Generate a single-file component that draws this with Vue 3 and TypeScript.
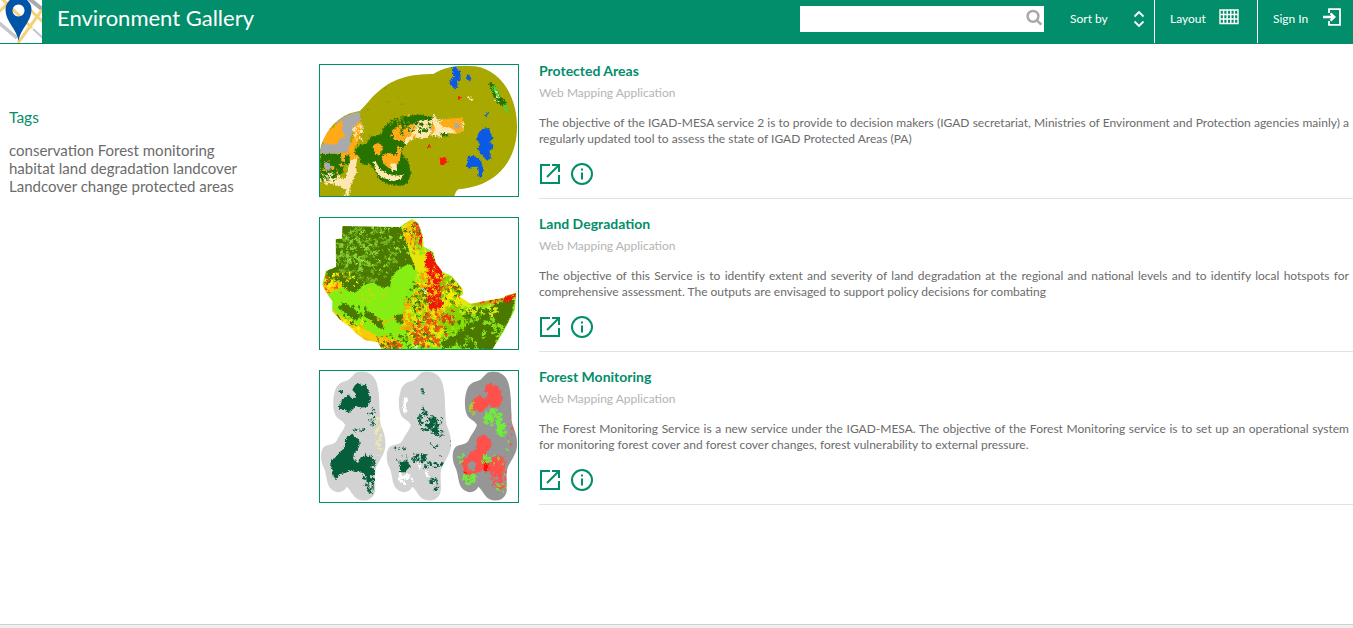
<script setup lang="ts">
interface Shape { fill: string; d: string }
interface Scatter { fill: string; cx: number; cy: number; rx: number; ry: number; n: number; s: number; seed: number }
interface Item {
  title: string
  lines: string[]
  outline: string[]
  base: string
  shapes: Shape[]
  scatter: Scatter[]
}

function speckle(s: Scatter): string {
  let state = s.seed * 7919 + 17
  const rnd = (): number => {
    state = (state * 16807) % 2147483647
    return state / 2147483647
  }
  for (let i = 0; i < 5; i++) rnd()
  let d = ''
  for (let i = 0; i < s.n; i++) {
    const a = rnd() * Math.PI * 2
    const r = Math.sqrt(rnd())
    const x = s.cx + Math.cos(a) * r * s.rx
    const y = s.cy + Math.sin(a) * r * s.ry
    const w = s.s * (0.5 + rnd())
    const h = s.s * (0.5 + rnd())
    d += `M${x.toFixed(1)} ${y.toFixed(1)}l${w.toFixed(1)} ${(h * 0.4).toFixed(1)}l${(-w * 0.3).toFixed(1)} ${h.toFixed(1)}l${(-w).toFixed(1)} ${(-h * 0.5).toFixed(1)}z`
  }
  return d
}

const sc = (fill: string, cx: number, cy: number, rx: number, ry: number, n: number, s: number, seed: number): Scatter =>
  ({ fill, cx, cy, rx, ry, n, s, seed })

const lobe = (x: number): string =>
  `M${x + 105} 20C${x + 130} 10 ${x + 160} 22 ${x + 168} 50C${x + 178} 85 ${x + 175} 120 ${x + 178} 150C${x + 174} 175 ${x + 194} 195 ${x + 194} 230C${x + 196} 260 ${x + 178} 280 ${x + 168} 300C${x + 158} 325 ${x + 166} 350 ${x + 163} 375C${x + 160} 398 ${x + 138} 408 ${x + 118} 402C${x + 96} 396 ${x + 92} 372 ${x + 78} 362C${x + 70} 380 ${x + 48} 384 ${x + 32} 370C${x + 16} 355 ${x + 20} 330 ${x + 10} 306C${x} 290 ${x - 2} 262 ${x + 6} 248C${x + 14} 232 ${x + 38} 240 ${x + 48} 224C${x + 55} 208 ${x + 68} 194 ${x + 74} 178C${x + 68} 162 ${x + 48} 162 ${x + 42} 142C${x + 34} 118 ${x + 38} 80 ${x + 48} 62C${x + 60} 42 ${x + 84} 48 ${x + 90} 35Z`

const upperForest = (x: number): string =>
  `M${x + 103} 57L${x + 118} 50 ${x + 122} 60 ${x + 136} 56 ${x + 141} 72 ${x + 148} 76 ${x + 144} 88 ${x + 152} 96 ${x + 148} 106 ${x + 140} 122 ${x + 120} 125 ${x + 112} 118 ${x + 98} 128 ${x + 84} 142 ${x + 74} 132 ${x + 56} 132 ${x + 54} 118 ${x + 62} 110 ${x + 64} 98 ${x + 76} 92 ${x + 84} 86 ${x + 92} 96 ${x + 106} 95 ${x + 104} 82 ${x + 95} 72Z`
const lowerForest = (x: number): string =>
  `M${x + 80} 212L${x + 95} 203 ${x + 105} 215 ${x + 114} 218 ${x + 118} 235 ${x + 112} 250 ${x + 100} 262 ${x + 98} 276 ${x + 112} 292 ${x + 120} 274 ${x + 140} 270 ${x + 154} 274 ${x + 152} 296 ${x + 154} 318 ${x + 148} 330 ${x + 152} 344 ${x + 142} 352 ${x + 134} 326 ${x + 114} 314 ${x + 102} 318 ${x + 88} 312 ${x + 74} 322 ${x + 58} 324 ${x + 46} 340 ${x + 36} 328 ${x + 34} 306 ${x + 28} 298 ${x + 32} 280 ${x + 44} 276 ${x + 54} 260 ${x + 68} 250 ${x + 74} 238 ${x + 72} 222Z`

const items: Item[] = [
  {
    title: 'Protected Areas',
    lines: [
      'The objective of the IGAD-MESA service 2 is to provide to decision makers (IGAD secretariat, Ministries of Environment and Protection agencies mainly) a',
      'regularly updated tool to assess the state of IGAD Protected Areas (PA)',
    ],
    base: '#a8a800',
    outline: ['M15 270C25 225 55 180 105 160L135 152C160 128 170 110 192 93C240 50 300 42 355 42C390 18 440 14 480 19C550 28 606 100 606 200C606 295 555 350 500 372C470 383 450 386 430 388Q423 392 418 408L15 408Z'],
    shapes: [
      { fill: '#aaaaaa', d: 'M15 270L38 224 75 176 135 153 137 180 116 207 105 240 113 277 15 282Z' },
      { fill: '#ffaa16', d: 'M38 213l45 -34 -2 38 12 10 -18 9 -10 16 -34 0 -13 -10zM119 200l15 -17 10 12 -8 19 -8 35 -12 17 5 18 -20 8 -1 -30 14 -24z' },
      { fill: '#ffaa16', d: 'M70 279l55 -2 7 13 -10 15 -33 5 -18 -4z' },
      { fill: '#267300', d: 'M16 282l62 0 1 21 11 5 0 -24 13 0 2 30 -17 -5 -6 32 -18 15 -18 -7 -12 17 -18 -12z' },
      { fill: '#ffe8b0', d: 'M105 305l22 -15 -4 30 2 14 -15 35 -10 39 -20 0 4 -25 -58 -18 12 -14 24 7 28 -4z' },
      { fill: '#267300', d: 'M117 278l15 -24 23 -3 10 -21 35 -8 7 -22 20 -18 30 -12 35 -4 25 -2 38 8 13 12 -15 13 -26 2 -18 15 -16 25 -22 12 -14 25 8 10 15 20 8 33 -9 31 -20 8 -37 -4 -29 -16 -12 -26 -20 -24 -8 8 -18 -10 -1 -14z' },
      { fill: '#ffe8b0', d: 'M175 304l8 3 12 20 24 15 29 5 20 -3 -11 13 -24 6 -32 -10 -19 -19z' },
      { fill: '#ffe8b0', d: 'M283 210l14 -20 22 -11 32 2 6 -22 10 23 20 -5 52 -1 8 20 -2 18 -25 7 -22 -2 -17 12 -35 -5 -24 10 -18 -3 -31 20 -6 -4z' },
      { fill: '#ffaa16', d: 'M233 212l22 -14 2 24 10 8 -12 14 -18 -5zM265 198l15 8 0 22 -15 7zM278 165l8 -3 -2 15zM175 256l17 -10 12 17 -8 20 -16 2zM200 288l22 -9 23 7 3 -30 12 11 -5 29 -11 21 -20 10 -20 -17zM328 190l25 0 9 17 -10 17 -23 -8zM387 178l56 -4 -2 20 6 18 -22 8 -18 -16 -22 -3 -14 -12z' },
      { fill: '#aaaaaa', d: 'M334 196l15 0 0 17 -12 0zM418 187l15 5 0 17 -13 -5zM27 306l15 2 11 14 -13 16 -12 -8z' },
      { fill: '#ffe8b0', d: 'M226 310l18 2 3 17 -13 5 -8 -10z' },
      { fill: '#0a5ae6', d: 'M411 21l13 -3 2 12 12 4 -2 27 -9 6 1 15 -9 6 -16 -19 5 -13 10 -3 -7 -19zM457 42l12 12 -4 11 -11 -12zM499 208l19 -4 9 13 6 21 -10 9 13 8 -5 14 -8 2 5 24 -14 7 -23 -28 -4 -10 9 -13 -12 -13 7 -19zM456 291l19 -5 20 11 10 28 -4 26 -12 3 3 -21 -9 -16 -16 9 -14 -6 6 -14zM505 164l6 3 8 -13 3 2 -6 16z' },
      { fill: '#267300', d: 'M374 218l22 2 5 10 -23 -2zM520 67l13 3 15 22 12 22 13 8 -2 25 -12 -12 -11 -5 -8 -15z' },
      { fill: '#45d53c', d: 'M530 77l14 5 10 30 -12 -6zM562 132l11 3 8 34 -13 -22z' },
      { fill: '#ff1808', d: 'M429 107l11 4 -1 7 -10 -2zM337 254l10 2 -1 8 -10 -2zM374 295l16 -5 9 17 -10 2 -6 8 -7 -9z' },
    ],
    scatter: [
      sc('#ffe8b0', 313, 201, 38, 20, 50, 7, 1), sc('#267300', 303, 189, 50, 24, 45, 6, 2),
      sc('#ffaa16', 260, 210, 45, 28, 30, 7, 3), sc('#ffe8b0', 45, 352, 29, 18, 40, 6, 4),
      sc('#ffaa16', 50, 321, 30, 26, 12, 6, 5), sc('#a8a800', 55, 395, 34, 25, 75, 6, 6),
      sc('#ffe8b0', 128, 210, 16, 30, 20, 6, 7), sc('#a8a800', 245, 188, 42, 18, 22, 4, 8),
      sc('#ffe8b0', 465, 112, 10, 5, 5, 4, 9), sc('#736b45', 210, 110, 120, 60, 9, 3, 10),
      sc('#d7f5b5', 544, 106, 8, 22, 9, 4, 11), sc('#267300', 40, 345, 26, 20, 28, 5, 12),
    ],
  },
  {
    title: 'Land Degradation',
    lines: [
      'The objective of this Service is to identify extent and severity of land degradation at the regional and national levels and to identify local hotspots for',
      'comprehensive assessment. The outputs are envisaged to support policy decisions for combating',
    ],
    base: '#86ee12',
    outline: ['M82 39L255 42 270 31 292 18 309 31 323 65 326 101 354 116 363 150 382 176 410 189 444 229 443 246 432 250 467 272 510 264 565 254 575 247 604 239 599 291 566 355 533 408 200 408 188 387 151 382 123 361 105 342 75 320 52 295 52 265 34 239 22 215 33 174 63 161 62 79 81 76Z'],
    shapes: [
      { fill: '#4b7900', d: 'M82 39L255 42 280 73 294 100 310 122 322 160 300 170 285 153 254 166 230 190 225 220 200 224 175 208 145 216 120 238 90 230 70 200 42 185 33 174 63 161 62 79 81 76ZM448 290l34 -10 28 10 54 -26 35 -3 -11 49 -55 98 -69 0 -40 -11 -38 11 -9 -20 35 -14 35 -28 4 -31z' },
      { fill: '#e6e60a', d: 'M260 41l32 -22 18 13 13 33 4 37 36 48 20 28 50 28 10 40 28 22 -27 13 -38 10 -12 42 -30 69 -70 0 -22 -50 -12 -20 8 -45 30 -50 8 -60 -20 -50z' },
      { fill: '#ee1808', d: 'M302 32l9 -1 10 40 0 32 -13 -13 0 -28zM334 116l15 2 15 35 17 22 2 33 -7 42 5 34 -14 4 -12 -12 -20 0 -3 -23 13 -11 -9 -24 15 -4 -13 -25 -9 -40 6 -16zM402 286l26 -3 -19 20z' },
      { fill: '#c8a808', d: 'M460 272l80 -12 63 -22 0 18 -40 8 -60 14z' },
      { fill: '#ee1808', d: 'M492 266l14 -4 2 8zM568 251l14 -7 8 4 12 -8 0 10 -14 10 -22 4z' },
      { fill: '#f8cb08', d: 'M22 214l58 -9 0 20 -38 15 -8 10zM52 290l42 30 50 25 50 28 56 8 15 27 -65 0 -20 -20 -32 -6 -30 -16 -30 -30 -28 -18z' },
      { fill: '#4b7900', d: 'M81 268l20 9 21 15 13 20 -12 13 -22 -16 -18 -15zM148 290l27 14 28 20 3 27 -20 -8 -15 -20 -22 -12zM235 307l28 -3 3 29 -20 -3zM35 180l28 8 5 16 -38 12z' },
      { fill: '#ffffff', d: 'M318 228l9 -3 8 14 -7 11 -6 -10zM298 386l7 -4 2 26 -7 0zM337 350l7 -5 -5 20z' },
    ],
    scatter: [
      sc('#77b626', 150, 120, 95, 85, 290, 6, 21), sc('#99e72e', 190, 105, 105, 75, 65, 6, 22),
      sc('#4b7900', 165, 110, 100, 85, 170, 7, 23), sc('#86ce3a', 125, 105, 55, 60, 60, 7, 24),
      sc('#ffbd08', 285, 53, 26, 30, 42, 8, 25), sc('#e85b11', 300, 70, 20, 52, 34, 6, 26),
      sc('#4b7900', 290, 40, 28, 18, 14, 5, 46), sc('#86e612', 305, 95, 22, 40, 24, 6, 47),
      sc('#86e612', 324, 290, 58, 118, 165, 7, 27), sc('#ff9b00', 345, 255, 52, 105, 115, 7, 28),
      sc('#ee1808', 358, 220, 24, 70, 90, 9, 29), sc('#f8ef00', 405, 225, 32, 38, 45, 7, 30),
      sc('#f8cb08', 352, 205, 28, 60, 40, 6, 48), sc('#86c410', 405, 225, 40, 40, 50, 7, 49),
      sc('#4b7900', 420, 230, 42, 44, 26, 6, 31), sc('#f05010', 343, 348, 58, 54, 60, 9, 32),
      sc('#86df15', 482, 350, 80, 60, 45, 10, 33), sc('#4b7900', 108, 300, 54, 34, 32, 8, 34),
      sc('#ffb000', 205, 360, 92, 52, 30, 8, 35), sc('#e25711', 225, 393, 48, 15, 25, 7, 36),
      sc('#4b7900', 240, 385, 75, 27, 38, 6, 37), sc('#c8d808', 175, 244, 44, 24, 18, 6, 38),
      sc('#fa5611', 58, 210, 45, 28, 14, 6, 39), sc('#ff9b00', 273, 299, 13, 56, 32, 7, 40),
      sc('#86d400', 415, 313, 42, 40, 78, 9, 41), sc('#d8eb12', 490, 285, 60, 20, 35, 7, 42),
      sc('#ee3510', 405, 305, 32, 24, 18, 7, 50), sc('#4b7900', 430, 340, 60, 60, 40, 7, 51),
      sc('#4b7900', 302, 246, 30, 44, 34, 6, 43), sc('#ee3510', 415, 220, 28, 30, 12, 6, 44),
      sc('#f8ef00', 78, 200, 48, 26, 28, 6, 45), sc('#4b7900', 320, 345, 50, 60, 40, 5, 52),
      sc('#ee1808', 540, 259, 55, 8, 22, 5, 53), sc('#f8ef00', 105, 340, 50, 28, 30, 7, 54),
    ],
  },
  {
    title: 'Forest Monitoring',
    lines: [
      'The Forest Monitoring Service is a new service under the IGAD-MESA. The objective of the Forest Monitoring service is to set up an operational system',
      'for monitoring forest cover and forest cover changes, forest vulnerability to external pressure.',
    ],
    base: '#d2d2d2',
    outline: [lobe(17), lobe(214), lobe(412)],
    shapes: [
      { fill: '#969696', d: 'M408 0h220v420h-220z' },
      { fill: '#065f3b', d: upperForest(17) },
      { fill: '#065f3b', d: lowerForest(17) },
      { fill: '#ff514b', d: upperForest(412) },
      { fill: '#ff514b', d: lowerForest(412) },
      { fill: '#969696', d: 'M457 293l18 -8 9 10 -8 20 -15 -3z' },
      { fill: '#ff1005', d: 'M506 290l15 5 -3 18 -10 5zM448 310l12 18 5 16 -12 -10z' },
      { fill: '#065f3b', d: 'M254 288l18 -6 11 9 4 11 -10 8 -4 9 -18 0z' },
      { fill: '#ffffff', d: 'M267 97l7 -5 6 11 -8 11 5 24 -8 5 -6 -10zM252 319l14 11 15 -5 -2 18 -15 -6 -14 12zM307 291l12 6 -5 16zM330 318l7 -5 5 21 -8 -2z' },
      { fill: '#6fed3b', d: 'M526 128l16 -2 -7 15 -10 6 15 16 -8 9 -16 -15zM547 155l9 24 16 6 -14 12 0 14 -12 -8 2 -15z' },
    ],
    scatter: [
      sc('#065f3b', 170, 150, 16, 40, 16, 4, 51), sc('#065f3b', 130, 187, 20, 6, 6, 5, 52),
      sc('#065f3b', 160, 312, 18, 62, 42, 7, 53), sc('#f2eaa2', 190, 206, 13, 66, 32, 6, 54),
      sc('#065f3b', 330, 152, 28, 36, 36, 7, 55), sc('#065f3b', 354, 182, 14, 23, 22, 8, 56),
      sc('#065f3b', 309, 270, 23, 12, 24, 7, 57), sc('#065f3b', 345, 291, 42, 12, 18, 6, 58),
      sc('#065f3b', 254, 265, 24, 40, 12, 5, 59), sc('#065f3b', 355, 351, 14, 23, 15, 6, 60),
      sc('#065f3b', 370, 215, 24, 70, 15, 5, 61), sc('#ffffff', 270, 336, 25, 18, 14, 6, 62),
      sc('#065f3b', 320, 68, 4, 8, 3, 6, 73), sc('#065f3b', 75, 72, 4, 8, 3, 4, 74),
      sc('#6fed3b', 534, 152, 30, 28, 42, 7, 63), sc('#6fed3b', 556, 186, 12, 20, 18, 8, 64),
      sc('#6fed3b', 513, 277, 16, 13, 13, 7, 65), sc('#6fed3b', 462, 334, 24, 17, 34, 6, 66),
      sc('#a2d62c', 470, 122, 9, 24, 16, 5, 67), sc('#ff514b', 550, 317, 25, 54, 48, 7, 68),
      sc('#6fed3b', 555, 360, 17, 16, 12, 5, 69), sc('#6fed3b', 555, 260, 38, 70, 12, 5, 70),
      sc('#ef5b56', 584, 195, 7, 54, 7, 6, 71), sc('#6fed3b', 440, 270, 14, 36, 7, 5, 72),
    ],
  },
]
</script>

<template>
  <div class="page">
    <header class="bar">
      <svg class="logo" viewBox="0 0 42 43">
        <rect width="42" height="43" fill="#fff" />
        <path d="M27 -3L43 10" stroke="#a9a9b0" stroke-width="4" />
        <path d="M-2 22L17 38" stroke="#c5c5cc" stroke-width="3.500" />
        <path d="M-2 13L14 -3M25 5L43 22M42 10L18 43M-2 -5L32 28" stroke="#f5d27a" stroke-width="3" />
        <path d="M33 29L44 39" stroke="#c5c5cc" stroke-width="2" />
        <path fill="#0055a8" fill-rule="evenodd" d="M18.500 41C17 29 5.500 22 5.500 9.500A13 12.500 0 0 1 31.500 9.500C31.500 22 20 29 18.500 41ZM18.500 4.500a6 6 0 1 0 .01 0Z" />
      </svg>
      <h1>Environment Gallery</h1>
      <div class="search">
        <svg width="18" height="18" viewBox="0 0 18 18"><circle cx="7" cy="7.300" r="5.400" /><path d="M11 11.500l4.300 4.200" /></svg>
      </div>
      <div class="sort"><span>Sort by</span>
        <svg width="12" height="18" viewBox="0 0 12 18"><path d="M1.500 6.500L6 2l4.500 4.500M1.500 11.500L6 16l4.500-4.500" /></svg>
      </div>
      <div class="layout"><span>Layout</span>
        <svg width="20" height="16" viewBox="0 0 20 16"><path d="M1 1h18v13.500H1zM1 5.500h18M1 10h18M4.600 1v13.500M8.200 1v13.500M11.800 1v13.500M15.400 1v13.500" /></svg>
      </div>
      <div class="sign"><span>Sign In</span>
        <svg width="19" height="18" viewBox="0 0 19 18"><path d="M6 5V1.200h11v15.600H6V13" /><path class="arrow" d="M0 9h11M7.500 5.300L11.300 9l-3.800 3.700" /></svg>
      </div>
    </header>
    <div class="body">
      <aside>
        <h2>Tags</h2>
        <p>conservation Forest monitoring<br>habitat land degradation landcover<br>Landcover change protected areas</p>
      </aside>
      <main>
        <article v-for="(item, i) in items" :key="item.title">
          <svg class="thumb" viewBox="15 15 594 393" preserveAspectRatio="none">
            <defs>
              <clipPath :id="'land' + i"><path v-for="o in item.outline" :key="o" :d="o" /></clipPath>
              <filter :id="'rough' + i" x="0" y="0" width="1" height="1" color-interpolation-filters="sRGB">
                <feTurbulence type="fractalNoise" baseFrequency="0.2" numOctaves="2" :seed="i + 3" />
                <feDisplacementMap in="SourceGraphic" scale="12" xChannelSelector="R" yChannelSelector="G" />
              </filter>
            </defs>
            <rect x="15" y="15" width="594" height="393" fill="#fff" />
            <g :clip-path="`url(#land${i})`">
              <g :filter="`url(#rough${i})`">
                <rect x="-10" y="-10" width="650" height="450" :fill="item.base" />
                <path v-for="(s, k) in item.shapes" :key="k" :d="s.d" :fill="s.fill" />
                <path v-for="s in item.scatter" :key="s.seed" :d="speckle(s)" :fill="s.fill" />
              </g>
            </g>
          </svg>
          <div class="info">
            <h3>{{ item.title }}</h3>
            <div class="kind">Web Mapping Application</div>
            <div class="desc"><div v-for="(l, k) in item.lines" :key="k" :class="{ full: k === 0 }">{{ l }}</div></div>
            <div class="actions">
              <svg width="22" height="22" viewBox="0 0 22 22"><path d="M11 2H2v18h18V12M8 14L19.500 2.500M13 2h7v7" /></svg>
              <svg width="22" height="22" viewBox="0 0 22 22"><circle cx="11" cy="11" r="10" /><path d="M11 9.500v7M11 5.500v2" /></svg>
            </div>
          </div>
        </article>
      </main>
    </div>
    <footer></footer>
  </div>
</template>

<style>
body { margin: 0; background: #fff; overflow: hidden; }
</style>
<style scoped>
.page { width: 1353px; height: 628px; display: flex; flex-direction: column; font-family: Lato, Carlito, "Liberation Sans", sans-serif; color: #6b6b6b; overflow: hidden; }
svg { display: block; flex: none; fill: none; }
h1, h2, h3, p { margin: 0; font-weight: 400; }
.bar { height: 44px; box-sizing: border-box; border-bottom: 1px solid #008c68; background: #028e6a; color: #fff; display: flex; flex: none; font-size: 12px; }
.logo { width: 42px; height: 43px; }
h1 { font-size: 22px; line-height: 26px; padding: 5px 0 0 15px; width: 743px; box-sizing: border-box; white-space: nowrap; margin-right: 15px; }
.search { width: 244px; height: 26px; margin-top: 6px; background: #fff; box-sizing: border-box; padding: 3px 0 0 226px; flex: none; }
.search svg { stroke: #a9a9a9; stroke-width: 2.5; }
.sort, .layout, .sign { display: flex; justify-content: space-between; box-sizing: border-box; height: 43px; line-height: 15px; padding-top: 11px; white-space: nowrap; flex: none; }
.bar span { display: block; }
.sort { width: 111px; padding-left: 26px; padding-right: 9px; border-right: 1px solid #fff; }
.layout { width: 103px; padding-left: 15px; padding-right: 18px; border-right: 1px solid #fff; }
.sign { width: 95px; padding-left: 15px; padding-right: 11px; }
.sort svg, .layout svg, .sign svg { stroke: #fff; stroke-width: 1.8; margin-top: -1px; }
.layout svg { stroke-width: 1.4; margin-top: -2px; }
.sign svg { margin-top: -3px; }
.sign .arrow { stroke-width: 2.4; }
.body { flex: 1; display: flex; }
aside { width: 310px; padding: 63px 0 0 9px; flex: none; }
h2 { color: #028e6a; font-size: 15.500px; line-height: 20px; }
aside p { font-size: 15px; line-height: 18px; margin-top: 14px; white-space: nowrap; }
main { padding-top: 20px; width: 1034px; }
article { display: flex; height: 135px; margin-bottom: 18px; }
.thumb { width: 198px; height: 131px; border: 1px solid #028e6a; margin-right: 20px; }
.info { width: 814px; box-sizing: border-box; border-bottom: 1px solid #e2e2e2; }
h3 { color: #028e6a; font-size: 14px; font-weight: 700; line-height: 16px; margin-top: -1px; }
.kind { color: #b4b4b4; font-size: 12px; line-height: 16px; margin-top: 6px; }
.desc { font-size: 12px; line-height: 16px; margin-top: 14px; width: 810px; white-space: nowrap; }
.full { white-space: normal; text-align: justify; text-align-last: justify; height: 16px; }
.actions { display: flex; gap: 10px; margin-top: 16px; }
.actions svg { stroke: #028e6a; stroke-width: 2; }
footer { height: 4px; box-sizing: border-box; border-top: 1px solid #cfcfcf; background: #efefef; flex: none; }
</style>
